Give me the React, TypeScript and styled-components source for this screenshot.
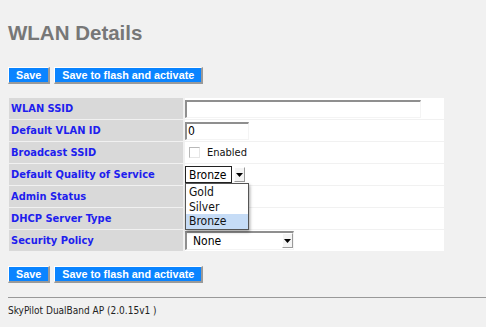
import React from 'react';
import styled, { createGlobalStyle } from 'styled-components';

const GlobalStyle = createGlobalStyle`
  html, body {
    margin: 0;
    padding: 0;
    background: #f1f1f1;
  }
  body {
    font-family: "DejaVu Sans Condensed", "DejaVu Sans", Verdana, sans-serif;
  }
`;

const Page = styled.div`
  width: 486px;
  height: 327px;
  overflow: hidden;
  padding: 21px 0 0 8px;
  box-sizing: border-box;
`;

const Title = styled.h1`
  margin: 0;
  font-family: "Liberation Sans", Arial, sans-serif;
  font-size: 20.5px;
  line-height: 24px;
  font-weight: bold;
  color: #777777;
`;

const ButtonRow = styled.div<{ $top: number }>`
  display: flex;
  gap: 4px;
  margin-top: ${p => p.$top}px;
`;

const BlueButton = styled.button`
  height: 17px;
  padding: 0 7px;
  background: #0a84ff;
  color: #ffffff;
  font-family: "Liberation Sans", Arial, sans-serif;
  font-size: 10.8px;
  font-weight: bold;
  line-height: 14px;
  border-style: solid;
  border-width: 1px 2px 2px 1px;
  border-color: #ffffff #9a9a9a #9a9a9a #ffffff;
  cursor: pointer;
`;

const Details = styled.table`
  margin-top: 13px;
  margin-left: -1px;
  border-collapse: separate;
  border-spacing: 2px 1.5px;
  width: 439px;
`;

const LabelCell = styled.td`
  width: 174px;
  height: 21px;
  box-sizing: border-box;
  padding: 0 0 0 2px;
  background: #d9d9d9;
  color: #1e1eee;
  font-size: 11px;
  font-weight: bold;
  white-space: nowrap;
`;

const ValueCell = styled.td`
  height: 21px;
  box-sizing: border-box;
  padding: 0;
  background: #ffffff;
  position: relative;
`;

const TextBox = styled.div<{ $w: number }>`
  width: ${p => p.$w}px;
  height: 18px;
  box-sizing: border-box;
  border-style: solid;
  border-width: 2px 1px 1px 2px;
  border-color: #8f8f8f #f4f4f4 #f4f4f4 #8f8f8f;
  font-size: 12px;
  line-height: 15px;
  padding-left: 1px;
  color: #000;
`;

const CheckLine = styled.label`
  display: flex;
  align-items: center;
  gap: 7px;
  padding-left: 4px;
  font-size: 11px;
  color: #111;
`;

const CheckBox = styled.span`
  width: 11px;
  height: 11px;
  box-sizing: border-box;
  border: 1px solid #b8b8b8;
  border-right-color: #e6e6e6;
  border-bottom-color: #e6e6e6;
  background: #fff;
`;

const SelectWrap = styled.div`
  display: flex;
  align-items: center;
  gap: 2px;
`;

const SelectBox = styled.div<{ $w: number; $open?: boolean }>`
  width: ${p => p.$w}px;
  height: ${p => (p.$open ? 17 : 19)}px;
  box-sizing: border-box;
  display: flex;
  align-items: center;
  padding-left: ${p => (p.$open ? 3 : 6)}px;
  font-size: 12px;
  color: #000;
  border-style: solid;
  ${p =>
    p.$open
      ? `border-width: 1px; border-color: #222;`
      : `border-width: 2px 1px 1px 2px; border-color: #8f8f8f #f4f4f4 #f4f4f4 #8f8f8f;`}
`;

const ArrowButton = styled.span<{ $inset?: boolean }>`
  width: 11px;
  height: 15px;
  box-sizing: border-box;
  display: flex;
  align-items: center;
  justify-content: center;
  background: #f4f4f4;
  border: 1px solid #9a9a9a;
  border-top-color: #fff;
  border-left-color: #fff;
  margin-left: ${p => (p.$inset ? '-14px' : '0')};
`;

const Menu = styled.ul`
  position: absolute;
  left: 0;
  top: 19px;
  z-index: 2;
  margin: 0;
  padding: 1px 0 0;
  list-style: none;
  width: 64px;
  box-sizing: border-box;
  background: #fff;
  border: 1px solid #555;
  box-shadow: 1px 2px 3px rgba(0, 0, 0, 0.35);
`;

const MenuItem = styled.li<{ $active?: boolean }>`
  height: 14.5px;
  line-height: 14.5px;
  padding-left: 3px;
  font-size: 12px;
  color: #111;
  background: ${p => (p.$active ? '#c6dcf6' : 'transparent')};
`;

const Rule = styled.hr`
  margin: 14px 0 0 0;
  border: 0;
  border-top: 1px solid #999;
  width: 478px;
`;

const Footer = styled.div`
  margin-top: 7px;
  font-size: 10px;
  color: #222;
`;

const Arrow = () => (
  <svg width="7" height="4" viewBox="0 0 7 4">
    <path d="M0 0h7L3.5 4z" fill="#000" />
  </svg>
);

const Buttons: React.FC<{ top: number }> = ({ top }) => (
  <ButtonRow $top={top}>
    <BlueButton>Save</BlueButton>
    <BlueButton>Save to flash and activate</BlueButton>
  </ButtonRow>
);

const App: React.FC = () => {
  const qos = ['Gold', 'Silver', 'Bronze'];
  return (
    <Page>
      <GlobalStyle />
      <Title>WLAN Details</Title>
      <Buttons top={22} />
      <Details>
        <tbody>
          <tr>
            <LabelCell>WLAN SSID</LabelCell>
            <ValueCell>
              <TextBox $w={236} />
            </ValueCell>
          </tr>
          <tr>
            <LabelCell>Default VLAN ID</LabelCell>
            <ValueCell>
              <TextBox $w={64}>0</TextBox>
            </ValueCell>
          </tr>
          <tr>
            <LabelCell>Broadcast SSID</LabelCell>
            <ValueCell>
              <CheckLine>
                <CheckBox />
                Enabled
              </CheckLine>
            </ValueCell>
          </tr>
          <tr>
            <LabelCell>Default Quality of Service</LabelCell>
            <ValueCell>
              <SelectWrap>
                <SelectBox $w={47} $open>Bronze</SelectBox>
                <ArrowButton>
                  <Arrow />
                </ArrowButton>
              </SelectWrap>
              <Menu>
                {qos.map(q => (
                  <MenuItem key={q} $active={q === 'Bronze'}>
                    {q}
                  </MenuItem>
                ))}
              </Menu>
            </ValueCell>
          </tr>
          <tr>
            <LabelCell>Admin Status</LabelCell>
            <ValueCell />
          </tr>
          <tr>
            <LabelCell>DHCP Server Type</LabelCell>
            <ValueCell />
          </tr>
          <tr>
            <LabelCell>Security Policy</LabelCell>
            <ValueCell>
              <SelectWrap>
                <SelectBox $w={109}>None</SelectBox>
                <ArrowButton $inset>
                  <Arrow />
                </ArrowButton>
              </SelectWrap>
            </ValueCell>
          </tr>
        </tbody>
      </Details>
      <Buttons top={14} />
      <Rule />
      <Footer>SkyPilot DualBand AP (2.0.15v1 )</Footer>
    </Page>
  );
};

export default App;
